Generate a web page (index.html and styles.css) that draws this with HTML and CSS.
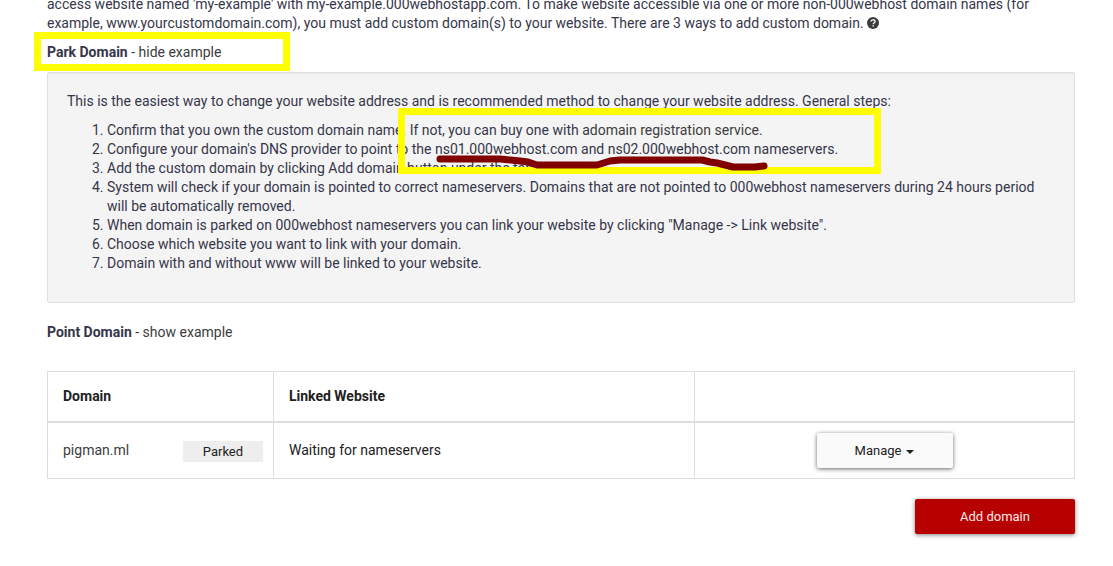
FILE: index.html
```html
<!DOCTYPE html>
<html lang="en">
<head>
<meta charset="utf-8">
<title>Domains</title>
<link rel="stylesheet" href="styles.css">
</head>
<body>
<main class="page">
  <p class="intro">access website named 'my-example' with my-example.000webhostapp.com. To make website accessible via one or more non-000webhost domain names (for example, www.yourcustomdomain.com), you must add custom domain(s) to your website. There are 3 ways to add custom domain.
    <svg class="help" viewBox="0 0 12 12" role="img" aria-label="Help"><circle cx="6" cy="6" r="6" fill="#3c3c3c"/><path d="M4 4.6C4 2.2 8.1 2.2 8.1 4.4C8.1 5.8 6.2 5.7 6.2 7.2" fill="none" stroke="#fff" stroke-width="1.3"/><path d="M5.5 8.2h1.4v1.4H5.5z" fill="#fff"/></svg>
  </p>
  <p class="method"><strong>Park Domain</strong> - <a href="#park">hide example</a></p>
  <section class="example" id="park">
    <p class="lead">This is the easiest way to change your website address and is recommended method to change your website address. General steps:</p>
    <ol class="steps">
      <li>Confirm that you own the custom domain name. If not, you can buy one with a<a href="#register">domain registration service.</a></li>
      <li>Configure your domain's DNS provider to point to the ns01.000webhost.com and ns02.000webhost.com nameservers.</li>
      <li>Add the custom domain by clicking Add domain button under the table.</li>
      <li>System will check if your domain is pointed to correct nameservers. Domains that are not pointed to 000webhost nameservers during 24 hours period will be automatically removed.</li>
      <li>When domain is parked on 000webhost nameservers you can link your website by clicking "Manage -&gt; Link website".</li>
      <li>Choose which website you want to link with your domain.</li>
      <li>Domain with and without www will be linked to your website.</li>
    </ol>
  </section>
  <p class="method"><strong>Point Domain</strong> - <a href="#point">show example</a></p>
  <table class="domains">
    <thead>
      <tr><th class="col-domain">Domain</th><th class="col-site">Linked Website</th><th class="col-action"></th></tr>
    </thead>
    <tbody>
      <tr>
        <td><div class="domain"><a href="#pigman">pigman.ml</a><span class="badge">Parked</span></div></td>
        <td>Waiting for nameservers</td>
        <td class="action"><button class="btn manage" type="button">Manage<span class="caret"></span></button></td>
      </tr>
    </tbody>
  </table>
  <div class="footer"><button class="btn add" type="button">Add domain</button></div>
</main>
<div class="mark mark-title"></div>
<div class="mark mark-servers"></div>
<svg class="stroke" viewBox="434 154 336 20" aria-hidden="true"><path d="M440 159H500L520 161L528 162L537 165H597L610 161L620 160H702L710 162L717 163L733 167H755L764 166" fill="none" stroke="#800000" stroke-width="7" stroke-linecap="round" stroke-linejoin="round"/></svg>
</body>
</html>
```
FILE: styles.css
```css
* { box-sizing: border-box; }
body {
  margin: 0;
  position: relative;
  overflow: hidden;
  background: #fff;
  color: #36364a;
  font: 14px/19px Roboto, "Liberation Sans", sans-serif;
}
p { margin: 0; }
a { color: #3c3c3c; text-decoration: none; }
.page {
  margin-top: -5px;
  padding: 0 38px 32px 47px;
}
.help { width: 12px; height: 12px; vertical-align: -1px; }
.method { margin-top: 10px; }
.example {
  margin: 10px 0 20px;
  padding: 19px 19px 29px;
  background: #f4f4f4;
  border: 1px solid #e0e0e0;
  border-radius: 2px;
  box-shadow: inset 0 1px 1px rgba(0, 0, 0, .05);
}
.steps { margin: 10px 0 0; padding-left: 40px; }
.domains {
  width: 100%;
  margin-top: 29px;
  border-collapse: collapse;
  table-layout: fixed;
  color: #212121;
}
.domains th, .domains td {
  border: 1px solid #ddd;
  padding: 10px 10px 10px 15px;
  text-align: left;
}
.domains th { height: 50px; border-bottom-width: 2px; }
.col-domain { width: 22%; }
.col-site { width: 41%; }
.col-action { width: 37%; }
.domains .action { padding: 10px; text-align: center; }
.domain { display: flex; justify-content: space-between; align-items: center; }
.badge {
  width: 80px;
  margin-top: 2px;
  background: #eee;
  font-size: 13px;
  line-height: 21px;
  text-align: center;
}
.btn {
  height: 35px;
  border: 0;
  border-radius: 2px;
  font: 13px/19px Roboto, "Liberation Sans", sans-serif;
  vertical-align: top;
}
.manage {
  width: 136px;
  background: #fafafa;
  color: #212121;
  box-shadow: 0 1px 4px rgba(0, 0, 0, .6);
}
.caret {
  display: inline-block;
  margin-left: 5px;
  border: 4px solid transparent;
  border-top-color: #212121;
  border-bottom: 0;
  vertical-align: 1px;
}
.footer { margin-top: 20px; text-align: right; }
.add {
  width: 160px;
  background: #b70000;
  color: #fbe9e9;
  box-shadow: 0 1px 4px rgba(0, 0, 0, .5);
}
.mark { position: absolute; border: 7px solid #ff0; }
.mark-title { left: 34px; top: 32px; width: 256px; height: 39px; }
.mark-servers { left: 398px; top: 108px; width: 483px; height: 66px; }
.stroke { position: absolute; left: 434px; top: 154px; width: 336px; height: 20px; }
```
